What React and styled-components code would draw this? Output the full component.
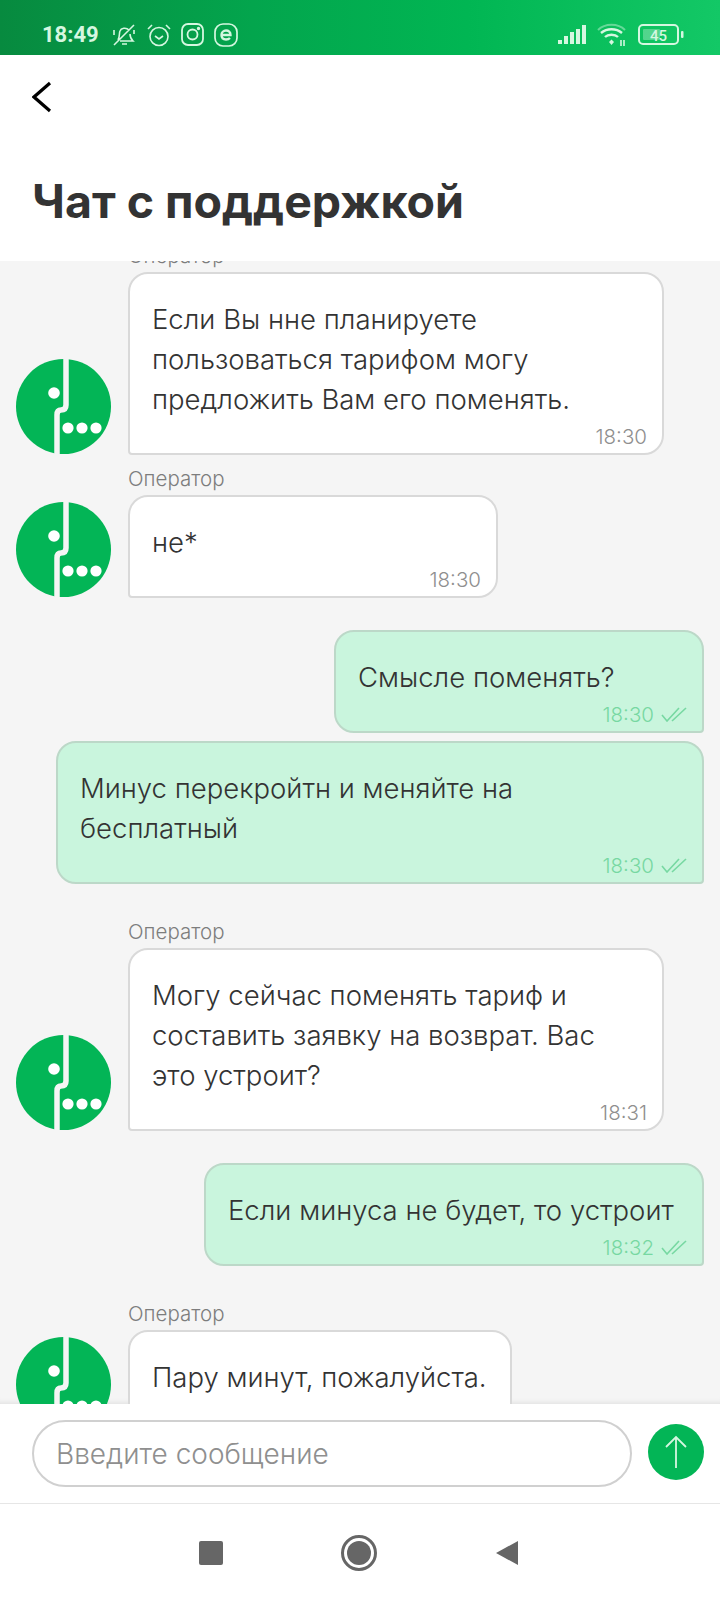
import styled, { createGlobalStyle } from "styled-components";

const GlobalStyle = createGlobalStyle`
  html, body { margin: 0; padding: 0; background: #fff; }
  body { font-family: Inter, "Liberation Sans", sans-serif; }
`;

const Screen = styled.div`
  width: 720px;
  height: 1600px;
  display: flex;
  flex-direction: column;
  overflow: hidden;
  background: #fff;
`;

const StatusBar = styled.div`
  height: 55px;
  flex: none;
  box-sizing: border-box;
  padding: 17px 36px 0 42px;
  display: flex;
  justify-content: space-between;
  align-items: flex-start;
  background: linear-gradient(90deg, #078a3f 0%, #03a54d 35%, #01b653 65%, #13c866 100%);
  color: #d5f7e0;
`;

const StatusGroup = styled.div`
  display: flex;
  align-items: center;
  gap: ${(p) => p.$gap || 10}px;
  height: 35px;
`;

const Clock = styled.span`
  font-family: Roboto, sans-serif;
  font-size: 22px;
  font-weight: 700;
  margin-right: 2px;
`;

const Header = styled.header`
  height: 206px;
  flex: none;
  box-sizing: border-box;
  padding: 26px 0 0 32px;
  background: #fff;
`;

const BackButton = styled.div`
  height: 32px;
  margin-bottom: 60px;
`;

const Title = styled.h1`
  margin: 0;
  font-size: 46.5px;
  line-height: 56px;
  font-weight: 700;
  color: #333;
`;

const ChatArea = styled.main`
  height: 1143px;
  flex: none;
  overflow: hidden;
  background: #f5f5f5;
  box-shadow: inset 0 -6px 6px -6px rgba(0, 0, 0, 0.12);
`;

const Feed = styled.div`
  margin-top: -17px;
  display: flex;
  flex-direction: column;
`;

const Row = styled.div`
  display: flex;
  align-items: flex-end;
  justify-content: ${(p) => (p.$mine ? "flex-end" : "flex-start")};
  gap: 17px;
  padding: 0 16px;
  margin-top: ${(p) => p.$top || 0}px;
`;

const Column = styled.div`
  display: flex;
  flex-direction: column;
`;

const Author = styled.div`
  font-size: 20.5px;
  font-weight: 300;
  line-height: 24px;
  height: 24px;
  margin-bottom: 4px;
  color: #7d7d7d;
`;

const Bubble = styled.div`
  box-sizing: border-box;
  width: ${(p) => p.$width}px;
  padding: 25px 22px 0;
  border-radius: ${(p) => (p.$mine ? "20px 20px 4px 20px" : "20px 20px 20px 4px")};
  border: 2px solid ${(p) => (p.$mine ? "#bcd8c8" : "#d9d9d9")};
  background: ${(p) => (p.$mine ? "#c9f5dd" : "#fff")};
`;

const MessageText = styled.div`
  font-size: 27.5px;
  font-weight: 300;
  line-height: 40px;
  color: #333;
  white-space: pre;
`;

const Meta = styled.div`
  height: 34px;
  display: flex;
  justify-content: flex-end;
  align-items: center;
  gap: 7px;
  margin-right: -7px;
  font-size: 20.5px;
  font-weight: 300;
  color: ${(p) => (p.$mine ? "#77d8a2" : "#8f8f8f")};
`;

const Avatar = styled.svg`
  width: 95px;
  height: 95px;
  flex: none;
  margin-bottom: 1px;
`;

const InputBar = styled.div`
  height: 100px;
  flex: none;
  box-sizing: border-box;
  padding: 16px 16px 0 32px;
  display: flex;
  align-items: flex-start;
  gap: 16px;
  background: #fff;
  border-bottom: 1px solid #e6e6e6;
`;

const InputBox = styled.div`
  flex: 1;
  height: 67px;
  box-sizing: border-box;
  border: 2px solid #d0d0d0;
  border-radius: 34px;
  padding-left: 22px;
  display: flex;
  align-items: center;
  font-size: 28px;
  font-weight: 300;
  color: #8f8f8f;
`;

const SendButton = styled.div`
  width: 56px;
  height: 56px;
  margin-top: 4px;
  border-radius: 50%;
  background: #03b556;
  display: flex;
  align-items: center;
  justify-content: center;
`;

const NavBar = styled.nav`
  flex: 1;
  display: flex;
  justify-content: center;
  align-items: flex-start;
  padding: 31px 2px 0 0;
  gap: 118px;
  background: #fff;
`;

const NavSquare = styled.div`
  width: 24px;
  height: 24px;
  margin-top: 6px;
  border-radius: 2px;
  background: #666;
`;

const NavCircle = styled.div`
  width: 36px;
  height: 36px;
  box-sizing: border-box;
  border: 3px solid #666;
  border-radius: 50%;
  display: flex;
  align-items: center;
  justify-content: center;
  &::after {
    content: "";
    width: 24px;
    height: 24px;
    border-radius: 50%;
    background: #666;
  }
`;

const NavTriangle = styled.svg`
  width: 24px;
  height: 26px;
  margin-top: 5px;
`;

function OperatorLogo() {
  return (
    <Avatar viewBox="0 0 95 95">
      <circle cx="47.5" cy="47.5" r="47.5" fill="#03b556" />
      <path d="M50 -2 V46 Q50 51 45 51 Q41 51 41 56 V97" fill="none" stroke="#f5f5f5" strokeWidth="5.5" />
      <circle cx="38" cy="34" r="5.8" fill="#fff" />
      <circle cx="52" cy="69" r="5.6" fill="#fff" />
      <circle cx="66" cy="69" r="5.6" fill="#fff" />
      <circle cx="80" cy="69" r="5.6" fill="#fff" />
    </Avatar>
  );
}

function Ticks() {
  return (
    <svg width="26" height="16" viewBox="0 0 26 16" fill="none" stroke="#77d8a2" strokeWidth="1.6">
      <path d="M1 9 L6 15 L18 2" />
      <path d="M11 15 L25 2" />
    </svg>
  );
}

function OperatorMessage({ text, time, width, top }) {
  return (
    <Row $top={top}>
      <OperatorLogo />
      <Column>
        <Author>Оператор</Author>
        <Bubble $width={width}>
          <MessageText>{text}</MessageText>
          <Meta>{time}</Meta>
        </Bubble>
      </Column>
    </Row>
  );
}

function MyMessage({ text, time, width, top }) {
  return (
    <Row $mine $top={top}>
      <Bubble $mine $width={width}>
        <MessageText>{text}</MessageText>
        <Meta $mine>
          {time}
          <Ticks />
        </Meta>
      </Bubble>
    </Row>
  );
}

export default function App() {
  return (
    <Screen>
      <GlobalStyle />
      <StatusBar>
        <StatusGroup>
          <Clock>18:49</Clock>
          <svg width="26" height="26" viewBox="0 0 26 26" fill="none" stroke="currentColor" strokeWidth="1.6">
            <path d="M7 18 C9 15 8 11 9 9 C10 6 15 5 18 8 M19 12 C19 15 20 17 22 19 H9 M11 22 H16 M3 23 L23 3" />
            <path d="M3 8 V13 M23 8 V12" />
          </svg>
          <svg width="24" height="24" viewBox="0 0 24 24" fill="none" stroke="currentColor" strokeWidth="1.6">
            <circle cx="12" cy="13.5" r="9" />
            <path d="M8 13 L12 16 L16 13 M1 6 L5 2 M23 6 L19 2" />
          </svg>
          <svg width="23" height="23" viewBox="0 0 23 23" fill="none" stroke="currentColor" strokeWidth="1.8">
            <rect x="1" y="1" width="21" height="21" rx="6" />
            <circle cx="11.5" cy="11.5" r="5" />
            <circle cx="17.5" cy="5.5" r="0.8" fill="currentColor" />
          </svg>
          <svg width="24" height="24" viewBox="0 0 24 24" fill="none" stroke="currentColor">
            <rect x="1" y="1" width="22" height="22" rx="8" strokeWidth="1.7" />
            <path d="M7.5 12 H16.5 C16.5 9 14.5 7.5 12 7.5 C9.5 7.5 7.5 9.5 7.5 12 C7.5 15 9.5 16.5 12 16.5 C13.5 16.5 15 16 16 15" strokeWidth="2.4" />
          </svg>
        </StatusGroup>
        <StatusGroup $gap={11}>
          <svg width="28" height="21" viewBox="0 0 28 21" fill="currentColor">
            <rect x="0" y="16" width="4" height="4" />
            <rect x="6" y="12" width="4" height="8" />
            <rect x="12" y="8" width="4" height="12" />
            <rect x="18" y="5" width="4" height="15" />
            <rect x="24" y="1" width="4" height="19" />
          </svg>
          <svg width="30" height="24" viewBox="0 0 30 24" fill="none" stroke="currentColor">
            <path d="M1 7 C8 0 21 0 28 7" strokeWidth="2" opacity="0.45" />
            <path d="M4 10 C10 5 19 5 25 10" strokeWidth="2.4" />
            <path d="M8 14 C11 11 18 11 21 14" strokeWidth="2.4" />
            <path d="M12 19 L14.5 16.5 L17 19 L14.5 22 Z" fill="currentColor" stroke="none" />
            <path d="M24 17 V23 M27 17 V23" strokeWidth="1.6" />
          </svg>
          <svg width="46" height="22" viewBox="0 0 46 22">
            <rect x="1" y="1" width="39" height="19" rx="4" fill="none" stroke="currentColor" strokeWidth="2" />
            <rect x="5" y="5" width="17" height="11" rx="1" fill="currentColor" opacity="0.35" />
            <rect x="43" y="7" width="2.5" height="7" rx="1" fill="currentColor" />
            <text x="20.5" y="16.5" textAnchor="middle" fontFamily="Roboto, sans-serif" fontSize="15" fontWeight="500" fill="currentColor">45</text>
          </svg>
        </StatusGroup>
      </StatusBar>

      <Header>
        <BackButton>
          <svg width="20" height="32" viewBox="0 0 20 32" fill="none" stroke="#000" strokeWidth="3.2">
            <path d="M18 2 L2 16 L18 30" />
          </svg>
        </BackButton>
        <Title>Чат с поддержкой</Title>
      </Header>

      <ChatArea>
        <Feed>
          <OperatorMessage
            width={536}
            text={"Если Вы нне планируете\nпользоваться тарифом могу\nпредложить Вам его поменять."}
            time="18:30"
          />
          <OperatorMessage top={12} width={370} text="не*" time="18:30" />
          <MyMessage top={32} width={370} text="Смысле поменять?" time="18:30" />
          <MyMessage top={8} width={648} text={"Минус перекройтн и меняйте на\nбесплатный"} time="18:30" />
          <OperatorMessage
            top={36}
            width={536}
            text={"Могу сейчас поменять тариф и\nсоставить заявку на возврат. Вас\nэто устроит?"}
            time="18:31"
          />
          <MyMessage top={32} width={500} text="Если минуса не будет, то устроит" time="18:32" />
          <OperatorMessage top={36} width={384} text="Пару минут, пожалуйста." />
        </Feed>
      </ChatArea>

      <InputBar>
        <InputBox>Введите сообщение</InputBox>
        <SendButton>
          <svg width="24" height="36" viewBox="0 0 24 36" fill="none" stroke="#d5f7e0" strokeWidth="1.8">
            <path d="M12 34 V3 M2 13 L12 3 L22 13" />
          </svg>
        </SendButton>
      </InputBar>

      <NavBar>
        <NavSquare />
        <NavCircle />
        <NavTriangle viewBox="0 0 24 26">
          <path d="M23 1 V25 L1 13 Z" fill="#666" />
        </NavTriangle>
      </NavBar>
    </Screen>
  );
}
